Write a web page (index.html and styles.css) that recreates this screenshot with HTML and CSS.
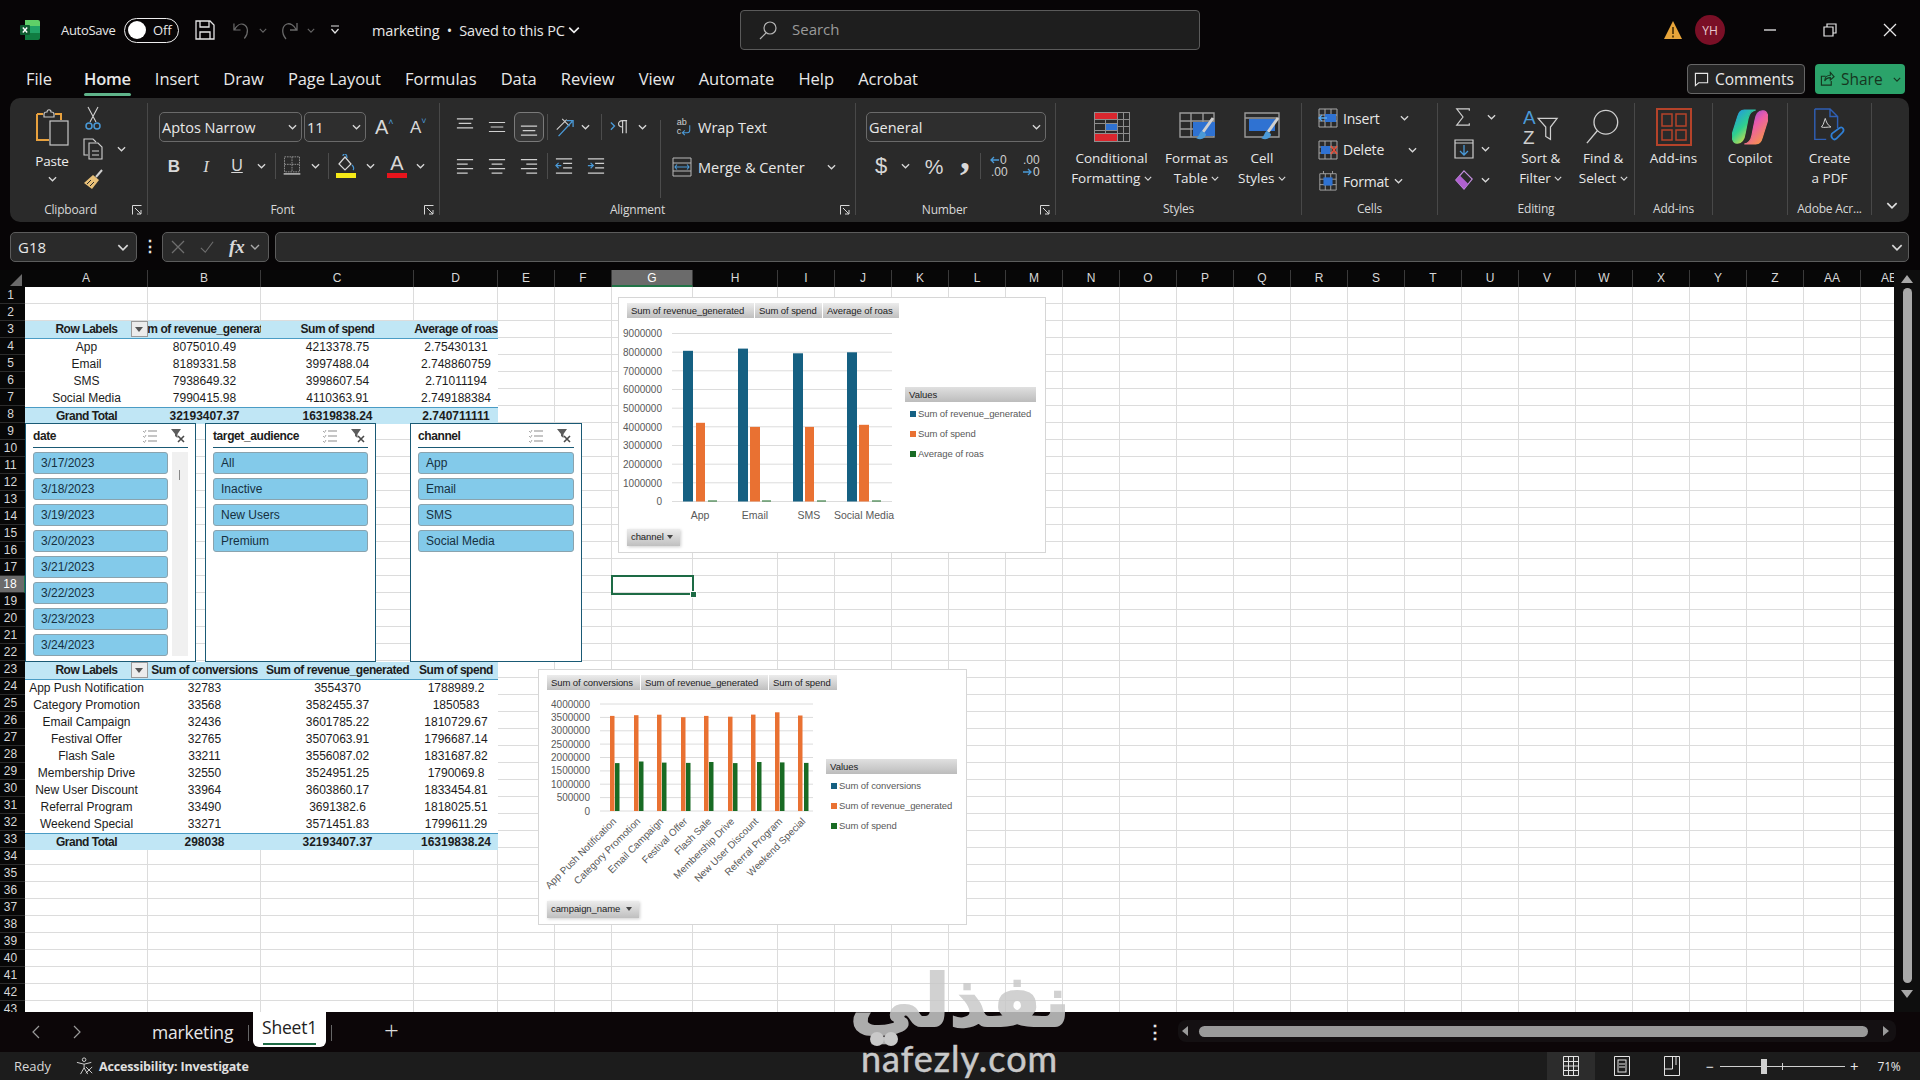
FILE: index.html
```html
<!DOCTYPE html>
<html lang="en">
<head>
<meta charset="UTF-8">
<meta name="viewport" content="width=device-width, initial-scale=1.0">
<title>marketing - Excel</title>
<link rel="stylesheet" href="styles.css">
</head>
<body>
  <!-- shared small icons -->
  <svg class="sprite">
    <symbol id="chev" viewBox="0 0 10 6"><path d="M1 1l4 4 4-4" fill="none" stroke="currentColor" stroke-width="1.4"/></symbol>
    <symbol id="launch" viewBox="0 0 10 10"><path d="M.5 9.5v-9h9M3 3l6 6M9 5v4H5" fill="none" stroke="#d8d8d8" stroke-width="1"/></symbol>
    <symbol id="lines-left" viewBox="0 0 20 20"><path d="M1 3h18M1 8h12M1 13h18M1 18h12" stroke="#cfcfcf" stroke-width="1.3"/></symbol>
    <symbol id="lines-center" viewBox="0 0 20 20"><path d="M1 3h18M4 8h12M1 13h18M4 18h12" stroke="#cfcfcf" stroke-width="1.3"/></symbol>
    <symbol id="lines-right" viewBox="0 0 20 20"><path d="M1 3h18M7 8h12M1 13h18M7 18h12" stroke="#cfcfcf" stroke-width="1.3"/></symbol>
    <symbol id="funnel-x" viewBox="0 0 16 16"><path d="M1 1h10L7.500 6v4L5 8V6z" fill="#5c5c5c"/><path d="M8 8l6 6M14 8l-6 6" stroke="#4a4a4a" stroke-width="1.6"/></symbol>
    <symbol id="multi" viewBox="0 0 16 14"><path d="M6 2h9M6 7h9M6 12h9" stroke="#8c8c8c" stroke-width="1.2"/><path d="M1 2l1.500 1.500L4 1M1 7l1.500 1.500L4 6M1 12l1.500 1.500L4 11" fill="none" stroke="#a8a8a8" stroke-width="1"/></symbol>
  </svg>

  <header class="titlebar">
    <svg class="xl-logo" viewBox="0 0 20 20">
      <path d="M5 0h13a2 2 0 0 1 2 2v4H5z" fill="#5fd068"/><path d="M5 6h15v7H5z" fill="#21a366"/><path d="M5 13h15v5a2 2 0 0 1-2 2H5z" fill="#107c41"/>
      <rect x="0" y="5" width="10" height="10" rx="1" fill="#0e5c30"/><path d="M2.800 7.500l4.400 5M7.200 7.500l-4.400 5" stroke="#fff" stroke-width="1.400"/>
    </svg>
    <span class="autosave">AutoSave</span>
    <span class="toggle"><span class="toggle-knob"></span><span>Off</span></span>
    <svg class="tb-save" viewBox="0 0 20 20"><path d="M1 1h14l4 4v14H1zM5 1v6h9V1M5 19v-7h10v7" fill="none" stroke="#e4e4e4" stroke-width="1.300"/></svg>
    <svg class="tb-undo" viewBox="0 0 18 20"><path d="M1 3v7h7M1.500 10C4 5 8 3 11 4c5 2 6 9 1 15" fill="none" stroke="#6a6a6a" stroke-width="1.300"/></svg>
    <svg class="tb-chev dim"><use href="#chev"/></svg>
    <svg class="tb-redo" viewBox="0 0 18 20"><path d="M17 3v7h-7M16.500 10C14 5 10 3 7 4c-5 2-6 9-1 15" fill="none" stroke="#6a6a6a" stroke-width="1.300"/></svg>
    <svg class="tb-chev dim"><use href="#chev"/></svg>
    <svg class="tb-custom" viewBox="0 0 10 10"><path d="M1 1h8M1.500 4l3.500 4 3.500-4" fill="none" stroke="#e4e4e4" stroke-width="1.200"/></svg>
    <span class="doc-name">marketing &nbsp;•&nbsp; Saved to this PC</span>
    <svg class="doc-chev"><use href="#chev"/></svg>
    <div class="search">
      <svg viewBox="0 0 20 20"><circle cx="12" cy="8" r="6" fill="none" stroke="#b5b5b5" stroke-width="1.200"/><path d="M8 13l-6 6" stroke="#b5b5b5" stroke-width="1.200"/></svg>
      <span>Search</span>
    </div>
    <svg class="warn" viewBox="0 0 20 20"><path d="M10 1l9 18H1z" fill="#e8a53a"/><path d="M10 7v7M10 15.500v2" stroke="#3a2400" stroke-width="1.500"/></svg>
    <span class="avatar">YH</span>
    <svg class="win-btn win-min" viewBox="0 0 14 14"><path d="M1 7h12" stroke="#e8e8e8" stroke-width="1.300"/></svg>
    <svg class="win-btn win-max" viewBox="0 0 14 14"><path d="M1 4h9v9H1zM4 4V1h9v9h-3" fill="none" stroke="#e8e8e8" stroke-width="1.200"/></svg>
    <svg class="win-btn win-close" viewBox="0 0 14 14"><path d="M1 1l12 12M13 1L1 13" stroke="#e8e8e8" stroke-width="1.300"/></svg>
  </header>

  <nav class="tabbar">
    <span class="tab tab-file">File</span>
    <span class="tab tab-active">Home</span>
    <span class="tab">Insert</span>
    <span class="tab">Draw</span>
    <span class="tab">Page Layout</span>
    <span class="tab">Formulas</span>
    <span class="tab">Data</span>
    <span class="tab">Review</span>
    <span class="tab">View</span>
    <span class="tab">Automate</span>
    <span class="tab">Help</span>
    <span class="tab">Acrobat</span>
    <div class="tab-actions">
      <button class="comments">
        <svg viewBox="0 0 16 16"><path d="M1.500 1.500h13v10H5l-3.500 3z" fill="none" stroke="#e8e8e8" stroke-width="1.200"/></svg>
        Comments
      </button>
      <button class="share">
        <svg viewBox="0 0 16 16"><path d="M6 5H1.500v9.500H12V10M5 10c0-4 3-6 6-6V1l4 4.500L11 9V6.500C8 6.500 6 8 5 10z" fill="none" stroke="#16361f" stroke-width="1.200"/></svg>
        Share
        <svg class="share-chev"><use href="#chev"/></svg>
      </button>
    </div>
  </nav>

  <section class="ribbon">
    <div class="group g-clipboard">
      <div class="group-body clip-body">
        <div class="paste">
          <svg class="paste-icon" viewBox="0 0 34 38">
            <path d="M2 6h6M20 6h6v6M2 6v26h12" fill="none" stroke="#e8a13e" stroke-width="2"/>
            <path d="M9 6c0-2 2-2 3-2 0-3 4-3 4 0 1 0 3 0 3 2v3H9z" fill="none" stroke="#c8c8c8" stroke-width="1.200"/>
            <rect x="15" y="13" width="18" height="24" fill="#2a2a2a" stroke="#c8c8c8" stroke-width="1.200"/>
          </svg>
          <span>Paste</span>
          <svg class="chev"><use href="#chev"/></svg>
        </div>
        <div class="clip-tools">
          <svg class="clip-ico" viewBox="0 0 16 24"><path d="M3 1l8 15M13 1L5 16" stroke="#d0d0d0" stroke-width="1.100"/><circle cx="4" cy="20" r="3" fill="none" stroke="#4a9ad8" stroke-width="1.500"/><circle cx="12" cy="20" r="3" fill="none" stroke="#4a9ad8" stroke-width="1.500"/></svg>
          <div class="clip-copy">
            <svg class="clip-ico" viewBox="0 0 20 22"><path d="M5 17H1V1h9l3 3" fill="none" stroke="#d0d0d0" stroke-width="1.100"/><path d="M6 5h9l4 4v12H6z" fill="#2a2a2a" stroke="#d0d0d0" stroke-width="1.100"/><path d="M9 13h7M9 17h7" stroke="#d0d0d0"/></svg>
            <svg class="chev"><use href="#chev"/></svg>
          </div>
          <svg class="clip-ico" viewBox="0 0 20 22"><path d="M19 1l-6 7" stroke="#d0d0d0" stroke-width="2"/><path d="M10 6l6 5-7 9-8-6z" fill="#e8c078"/><path d="M4 15l4-4M7 17l4-4" stroke="#2a2a2a"/></svg>
        </div>
      </div>
      <div class="group-label lb-clipboard">Clipboard<svg class="launch"><use href="#launch"/></svg></div>
    </div>

    <div class="group g-font">
      <div class="group-body">
        <div class="rows r-font1">
          <div class="select sel-font"><span>Aptos Narrow</span><svg class="chev"><use href="#chev"/></svg></div>
          <div class="select sel-size"><span>11</span><svg class="chev"><use href="#chev"/></svg></div>
          <span class="glyph big-a">A<sup>˄</sup></span>
          <span class="glyph small-a">A<sup>˅</sup></span>
        </div>
        <div class="rows r-font2">
          <span class="glyph fmt-b">B</span>
          <span class="glyph fmt-i">I</span>
          <span class="glyph fmt-u">U</span>
          <svg class="chev"><use href="#chev"/></svg>
          <i class="vsep"></i>
          <svg class="ico-20" viewBox="0 0 20 24"><path d="M1 1h18v18H1zM10 1v18M1 10h18" fill="none" stroke="#a0a0a0" stroke-width="1" stroke-dasharray="2 1"/><path d="M0 21.500h20" stroke="#d8d8d8" stroke-width="1.500"/></svg>
          <svg class="chev"><use href="#chev"/></svg>
          <i class="vsep"></i>
          <span class="color-btn"><svg viewBox="0 0 20 18"><path d="M3 10l6-7 6 7-6 6z" fill="none" stroke="#d8d8d8" stroke-width="1.200"/><path d="M7 2c0-3 4-3 4 2M16 11c2 2 2 4 1 5" fill="none" stroke="#4a9ad8" stroke-width="1.200"/></svg><b class="bar-yellow"></b></span>
          <svg class="chev"><use href="#chev"/></svg>
          <span class="color-btn"><span class="glyph color-a">A</span><b class="bar-red"></b></span>
          <svg class="chev"><use href="#chev"/></svg>
        </div>
      </div>
      <div class="group-label lb-font">Font<svg class="launch"><use href="#launch"/></svg></div>
    </div>

    <div class="group g-align">
      <div class="group-body align-body">
        <div class="align-grid">
          <div class="rows r-al1">
            <svg class="ico-18" viewBox="0 0 20 20"><path d="M1 1h18M3 6h14M1 11h18" stroke="#cfcfcf" stroke-width="1.300"/></svg>
            <svg class="ico-18" viewBox="0 0 20 20"><path d="M1 5h18M3 10h14M1 15h18" stroke="#cfcfcf" stroke-width="1.300"/></svg>
            <span class="al-on"><svg class="ico-18" viewBox="0 0 20 20"><path d="M1 9h18M3 14h14M1 19h18" stroke="#cfcfcf" stroke-width="1.300"/></svg></span>
            <i class="vsep"></i>
            <svg class="ico-20" viewBox="0 0 22 22"><path d="M3 14L14 3M9 2l8 8" stroke="#cfcfcf" stroke-width="1.200"/><path d="M5 21L20 5M14 4h7v7" fill="none" stroke="#4a9ad8" stroke-width="1.400"/></svg>
            <svg class="chev"><use href="#chev"/></svg>
            <i class="vsep"></i>
            <svg class="ico-18" viewBox="0 0 20 16"><path d="M1 3l4 4-4 4" fill="none" stroke="#4a9ad8" stroke-width="1.500"/><path d="M14 1v14M18 1v14M14 1h5M14 8c-6 0-6-7 0-7" fill="none" stroke="#cfcfcf" stroke-width="1.300"/></svg>
            <svg class="chev"><use href="#chev"/></svg>
          </div>
          <div class="rows r-al2">
            <svg class="ico-18"><use href="#lines-left"/></svg>
            <svg class="ico-18"><use href="#lines-center"/></svg>
            <svg class="ico-18"><use href="#lines-right"/></svg>
            <i class="vsep"></i>
            <svg class="ico-18" viewBox="0 0 20 20"><path d="M1 2h18M9 7h10M9 12h10M1 18h18" stroke="#cfcfcf" stroke-width="1.300"/><path d="M7 9.500H1M4 6.500l-3 3 3 3" fill="none" stroke="#4a9ad8" stroke-width="1.300"/></svg>
            <svg class="ico-18" viewBox="0 0 20 20"><path d="M1 2h18M9 7h10M9 12h10M1 18h18" stroke="#cfcfcf" stroke-width="1.300"/><path d="M1 9.500h6M4 6.500l3 3-3 3" fill="none" stroke="#4a9ad8" stroke-width="1.300"/></svg>
          </div>
        </div>
        <i class="vsep vsep-tall"></i>
        <div class="wrap-col">
          <div class="wrap-item">
            <svg class="ico-18" viewBox="0 0 18 22"><text x="0" y="9" class="svg-mini">ab</text><text x="0" y="20" class="svg-mini">c</text><path d="M16 9v6c0 3-2 3-3 3H7M10 15l-3 3 3 3" fill="none" stroke="#4a9ad8" stroke-width="1.300"/></svg>
            <span>Wrap Text</span>
          </div>
          <div class="wrap-item">
            <svg class="ico-20 merge-ico" viewBox="0 0 20 20"><path d="M1 1h18v18H1zM1 6h18M1 14h18" fill="none" stroke="#b8b8b8"/><path d="M3 10h14M5 7.500L3 10l2 2.500M15 7.500l2 2.500-2 2.500" fill="none" stroke="#4a9ad8" stroke-width="1.100"/></svg>
            <span>Merge &amp; Center</span>
            <svg class="chev merge-chev"><use href="#chev"/></svg>
          </div>
        </div>
      </div>
      <div class="group-label lb-align">Alignment<svg class="launch"><use href="#launch"/></svg></div>
    </div>

    <div class="group g-number">
      <div class="group-body">
        <div class="select sel-number"><span>General</span><svg class="chev"><use href="#chev"/></svg></div>
        <div class="rows r-num">
          <span class="glyph num-big">$</span>
          <svg class="chev"><use href="#chev"/></svg>
          <span class="glyph num-big num-pct">%</span>
          <span class="glyph num-comma">,</span>
          <i class="vsep"></i>
          <svg class="dec-ico" viewBox="0 0 20 24"><path d="M9 6H1M4 3L1 6l3 3" fill="none" stroke="#4a9ad8" stroke-width="1.300"/><text x="10" y="10">0</text><text x="1" y="22">.00</text></svg>
          <svg class="dec-ico" viewBox="0 0 20 24"><text x="1" y="10">.00</text><path d="M1 18h8M6 15l3 3-3 3" fill="none" stroke="#4a9ad8" stroke-width="1.300"/><text x="11" y="22">0</text></svg>
        </div>
      </div>
      <div class="group-label lb-number">Number<svg class="launch"><use href="#launch"/></svg></div>
    </div>

    <div class="group g-styles">
      <div class="group-body big-row">
        <div class="big-btn">
          <svg class="big-ico" viewBox="0 0 36 30"><rect width="36" height="30" fill="#8e8e8e"/><path d="M1 1h22v6H1zM1 22h22v7H1z" fill="#d9272e"/><path d="M1 12h10v6H1z" fill="#2a2a2a"/><path d="M12 12h11v6H12z" fill="#2f72d2"/><path d="M24 1h5v6h-5zM30 1h5v6h-5zM24 8h5v6h-5zM30 8h5v6h-5zM24 15h5v6h-5zM30 15h5v6h-5zM24 22h5v7h-5zM30 22h5v7h-5zM1 8h10v3H1zM12 8h11v3H12zM1 19h10v2H1zM12 19h11v2H12z" fill="#2a2a2a"/></svg>
          <span>Conditional<br>Formatting <svg class="chev"><use href="#chev"/></svg></span>
        </div>
        <div class="big-btn">
          <svg class="big-ico" viewBox="0 0 36 30"><path d="M1 1h34v24H1zM1 9h34M1 17h34M12 1v24M24 1v24" fill="none" stroke="#9a9a9a" stroke-width="1.400"/><path d="M14 10h22v14H14z" fill="#2f72d2"/><path d="M34 6L24 20" stroke="#d0d0d0" stroke-width="3"/><path d="M23 19c-3 1-2 5-6 7 5 3 10 0 10-4z" fill="#4a9ad8"/></svg>
          <span>Format as<br>Table <svg class="chev"><use href="#chev"/></svg></span>
        </div>
        <div class="big-btn">
          <svg class="big-ico" viewBox="0 0 36 30"><path d="M1 1h34v24H1zM1 6h34" fill="none" stroke="#9a9a9a" stroke-width="1.400"/><path d="M5 7h26v12H5z" fill="#2f72d2"/><path d="M34 6L24 20" stroke="#d0d0d0" stroke-width="3"/><path d="M23 19c-3 1-2 5-6 7 5 3 10 0 10-4z" fill="#4a9ad8"/></svg>
          <span>Cell<br>Styles <svg class="chev"><use href="#chev"/></svg></span>
        </div>
      </div>
      <div class="group-label label-low">Styles</div>
    </div>

    <div class="group g-cells">
      <div class="group-body cell-list">
        <div class="cell-item">
          <svg class="ico-20" viewBox="0 0 20 20"><path d="M1 1h18v18H1zM1 7h18M1 13h18M7 1v18M13 1v18" fill="none" stroke="#a8a8a8"/><path d="M7 6h11v8H7z" fill="#2f72d2"/><path d="M9 10H1M4 7l-3 3 3 3" fill="none" stroke="#5aaaf0" stroke-width="1.300"/></svg>
          <span>Insert</span><svg class="chev chev-insert"><use href="#chev"/></svg>
        </div>
        <div class="cell-item">
          <svg class="ico-20" viewBox="0 0 20 20"><path d="M1 1h18v18H1zM1 7h18M1 13h18M7 1v18M13 1v18" fill="none" stroke="#a8a8a8"/><path d="M3 6h9v8H3z" fill="#2f72d2"/><path d="M13 6l6 8M19 6l-6 8" stroke="#e8503a" stroke-width="1.500"/></svg>
          <span>Delete</span><svg class="chev chev-delete"><use href="#chev"/></svg>
        </div>
        <div class="cell-item">
          <svg class="ico-20" viewBox="0 0 20 22"><path d="M1 3h18v18H1zM1 9h18M1 15h18M7 3v18M13 3v18" fill="none" stroke="#a8a8a8"/><path d="M5 7h10v9H5z" fill="#2f72d2"/><path d="M5 0v3M15 0v3" stroke="#a8a8a8"/></svg>
          <span>Format</span><svg class="chev"><use href="#chev"/></svg>
        </div>
      </div>
      <div class="group-label label-low">Cells</div>
    </div>

    <div class="group g-editing">
      <div class="group-body edit-body">
        <div class="edit-small">
          <div class="edit-item"><svg class="ico-18" viewBox="0 0 18 20"><path d="M16 3V1H2l7 9-7 9h14v-2" fill="none" stroke="#cfcfcf" stroke-width="1.300"/></svg><svg class="chev edit-chev1"><use href="#chev"/></svg></div>
          <div class="edit-item"><svg class="ico-20" viewBox="0 0 20 20"><path d="M1 1h18v18H1zM1 4h18" fill="none" stroke="#cfcfcf" stroke-width="1.200"/><path d="M10 6v10M6 12l4 4 4-4" fill="none" stroke="#4a9ad8" stroke-width="1.300"/></svg><svg class="chev"><use href="#chev"/></svg></div>
          <div class="edit-item"><svg class="ico-20" viewBox="0 0 20 22"><path d="M10 1l9 9-9 11-9-10z" fill="none" stroke="#c58fe0" stroke-width="1.300"/><path d="M5.500 6l9 9-4.500 6-9-10z" fill="#b060d0"/></svg><svg class="chev"><use href="#chev"/></svg></div>
        </div>
        <div class="big-btn btn-sort">
          <svg class="big-ico" viewBox="0 0 38 38"><text x="0" y="16" class="svg-az a-blue">A</text><text x="0" y="37" class="svg-az">Z</text><path d="M16 10h20l-7 9v13l-5-3V19z" fill="none" stroke="#cfcfcf" stroke-width="1.300"/></svg>
          <span>Sort &amp;<br>Filter <svg class="chev"><use href="#chev"/></svg></span>
        </div>
        <div class="big-btn btn-find">
          <svg class="big-ico" viewBox="0 0 38 38"><circle cx="22" cy="14" r="12.500" fill="none" stroke="#cfcfcf" stroke-width="1.400"/><path d="M13 23L2 36" stroke="#cfcfcf" stroke-width="1.400"/></svg>
          <span>Find &amp;<br>Select <svg class="chev"><use href="#chev"/></svg></span>
        </div>
      </div>
      <div class="group-label label-low">Editing</div>
    </div>

    <div class="group g-addins">
      <div class="group-body big-row">
        <div class="big-btn">
          <svg class="big-ico" viewBox="0 0 36 38"><rect x="1" y="1" width="34" height="36" fill="none" stroke="#b5432a" stroke-width="2"/><rect x="6" y="6" width="10" height="12" fill="none" stroke="#b5432a" stroke-width="1.500"/><rect x="20" y="6" width="10" height="12" fill="none" stroke="#b5432a" stroke-width="1.500"/><rect x="6" y="22" width="10" height="10" fill="none" stroke="#b5432a" stroke-width="1.500"/><rect x="20" y="22" width="10" height="10" fill="none" stroke="#b5432a" stroke-width="1.500"/></svg>
          <span>Add-ins</span>
        </div>
      </div>
      <div class="group-label label-low">Add-ins</div>
    </div>

    <div class="group g-copilot">
      <div class="group-body big-row">
        <div class="big-btn">
          <svg class="big-ico" viewBox="0 0 38 38">
            <defs>
              <linearGradient id="cp1" x1="0" y1="0" x2=".7" y2="1"><stop offset="0" stop-color="#1f8ff0"/><stop offset=".55" stop-color="#2fd08e"/><stop offset="1" stop-color="#f6dc3c"/></linearGradient>
              <linearGradient id="cp2" x1="0" y1="0" x2=".7" y2="1"><stop offset="0" stop-color="#7a4cf0"/><stop offset=".5" stop-color="#ec5ca8"/><stop offset="1" stop-color="#f6944a"/></linearGradient>
            </defs>
            <path d="M13 1h12c-5 1-7 4-8 9l-3 15c-1 7-4 11-8 11h-1C1 36-1 30 1 24L6 8c1-4 3-7 7-7z" fill="url(#cp1)" stroke="url(#cp1)" stroke-width="1.200"/>
            <path d="M25 37H13c5-1 7-4 8-9l3-15c1-7 4-11 8-11h1c4 0 6 6 4 12l-5 16c-1 4-3 7-7 7z" fill="url(#cp2)" stroke="url(#cp2)" stroke-width="1.200"/>
          </svg>
          <span>Copilot</span>
        </div>
      </div>
    </div>

    <div class="group g-adobe">
      <div class="group-body big-row">
        <div class="big-btn">
          <svg class="big-ico" viewBox="0 0 34 40"><path d="M1 1h16l8 8v12M1 1v32h12M17 1v8h8" fill="none" stroke="#2f5fb5" stroke-width="1.500"/><path d="M8 20c3-3 3-8 4-9 1 3 2 7 6 9-4 0-7 1-10 0z" fill="none" stroke="#d8d8d8"/><path d="M19 27l8-6c3-2 6 2 3 5l-6 6c-3 3-7-1-5-5z" fill="none" stroke="#2f7fd5" stroke-width="1.800"/></svg>
          <span>Create<br>a PDF</span>
        </div>
      </div>
      <div class="group-label label-low">Adobe Acr...</div>
    </div>
    <svg class="ribbon-collapse"><use href="#chev"/></svg>
  </section>

  <section class="formulabar">
    <div class="namebox"><span>G18</span><svg class="chev"><use href="#chev"/></svg></div>
    <span class="fb-dots">⋮</span>
    <div class="fb-btns">
      <svg viewBox="0 0 14 14"><path d="M1 1l12 12M13 1L1 13" stroke="#6e6e6e" stroke-width="1.300"/></svg>
      <svg viewBox="0 0 16 14"><path d="M1 8l5 5L15 1" fill="none" stroke="#6e6e6e" stroke-width="1.300"/></svg>
      <span class="fx">fx</span>
      <svg class="chev"><use href="#chev"/></svg>
    </div>
    <div class="fb-input"><svg class="chev"><use href="#chev"/></svg></div>
  </section>

  <main class="sheet">
    <div class="rowheads">
      <div class="corner"><svg viewBox="0 0 12 12"><path d="M12 0v12H0z" fill="#6a6a6a"/></svg></div>
      <div>1</div><div>2</div><div>3</div><div>4</div><div>5</div><div>6</div><div>7</div><div>8</div><div>9</div><div>10</div>
      <div>11</div><div>12</div><div>13</div><div>14</div><div>15</div><div>16</div><div>17</div><div class="row-sel">18</div><div>19</div><div>20</div>
      <div>21</div><div>22</div><div>23</div><div>24</div><div>25</div><div>26</div><div>27</div><div>28</div><div>29</div><div>30</div>
      <div>31</div><div>32</div><div>33</div><div>34</div><div>35</div><div>36</div><div>37</div><div>38</div><div>39</div><div>40</div>
      <div>41</div><div>42</div><div>43</div>
    </div>

    <div class="grid">
      <div class="cols">
        <div class="col col-a"><span>A</span></div>
        <div class="col col-b"><span>B</span></div>
        <div class="col col-c"><span>C</span></div>
        <div class="col col-d"><span>D</span></div>
        <div class="col"><span>E</span></div>
        <div class="col"><span>F</span></div>
        <div class="col col-g col-sel"><span>G</span></div>
        <div class="col col-h"><span>H</span></div>
        <div class="col"><span>I</span></div><div class="col"><span>J</span></div><div class="col"><span>K</span></div>
        <div class="col"><span>L</span></div><div class="col"><span>M</span></div><div class="col"><span>N</span></div>
        <div class="col"><span>O</span></div><div class="col"><span>P</span></div><div class="col"><span>Q</span></div>
        <div class="col"><span>R</span></div><div class="col"><span>S</span></div><div class="col"><span>T</span></div>
        <div class="col"><span>U</span></div><div class="col"><span>V</span></div><div class="col"><span>W</span></div>
        <div class="col"><span>X</span></div><div class="col"><span>Y</span></div><div class="col"><span>Z</span></div>
        <div class="col"><span>AA</span></div><div class="col"><span>AB</span></div>
      </div>

      <div class="cells">
        <table class="pivot pivot-one">
          <colgroup><col class="w-a"><col class="w-b"><col class="w-c"><col class="w-d"></colgroup>
          <tr class="pv-head"><th><div class="clip">Row Labels</div><span class="pv-filter"></span></th><th><div class="clip">Sum of revenue_generated</div></th><th><div class="clip">Sum of spend</div></th><th><div class="clip">Average of roas</div></th></tr>
          <tr><td>App</td><td>8075010.49</td><td>4213378.75</td><td>2.75430131</td></tr>
          <tr><td>Email</td><td>8189331.58</td><td>3997488.04</td><td>2.748860759</td></tr>
          <tr><td>SMS</td><td>7938649.32</td><td>3998607.54</td><td>2.71011194</td></tr>
          <tr><td>Social Media</td><td>7990415.98</td><td>4110363.91</td><td>2.749188384</td></tr>
          <tr class="pv-total"><th>Grand Total</th><th>32193407.37</th><th>16319838.24</th><th>2.740711111</th></tr>
        </table>

        <table class="pivot pivot-two">
          <colgroup><col class="w-a"><col class="w-b"><col class="w-c"><col class="w-d"></colgroup>
          <tr class="pv-head"><th><div class="clip">Row Labels</div><span class="pv-filter"></span></th><th><div class="clip">Sum of conversions</div></th><th><div class="clip">Sum of revenue_generated</div></th><th><div class="clip">Sum of spend</div></th></tr>
          <tr><td>App Push Notification</td><td>32783</td><td>3554370</td><td>1788989.2</td></tr>
          <tr><td>Category Promotion</td><td>33568</td><td>3582455.37</td><td>1850583</td></tr>
          <tr><td>Email Campaign</td><td>32436</td><td>3601785.22</td><td>1810729.67</td></tr>
          <tr><td>Festival Offer</td><td>32765</td><td>3507063.91</td><td>1796687.14</td></tr>
          <tr><td>Flash Sale</td><td>33211</td><td>3556087.02</td><td>1831687.82</td></tr>
          <tr><td>Membership Drive</td><td>32550</td><td>3524951.25</td><td>1790069.8</td></tr>
          <tr><td>New User Discount</td><td>33964</td><td>3603860.17</td><td>1833454.81</td></tr>
          <tr><td>Referral Program</td><td>33490</td><td>3691382.6</td><td>1818025.51</td></tr>
          <tr><td>Weekend Special</td><td>33271</td><td>3571451.83</td><td>1799611.29</td></tr>
          <tr class="pv-total"><th>Grand Total</th><th>298038</th><th>32193407.37</th><th>16319838.24</th></tr>
        </table>

        <!-- slicers float over the cells -->
        <div class="slicer sl-date">
          <div class="sl-head"><b>date</b><svg class="sl-multi"><use href="#multi"/></svg><svg class="sl-clear"><use href="#funnel-x"/></svg></div>
          <div class="sl-body">
            <div class="sl-list">
              <span class="sl-item">3/17/2023</span><span class="sl-item">3/18/2023</span><span class="sl-item">3/19/2023</span><span class="sl-item">3/20/2023</span>
              <span class="sl-item">3/21/2023</span><span class="sl-item">3/22/2023</span><span class="sl-item">3/23/2023</span><span class="sl-item">3/24/2023</span>
            </div>
            <div class="sl-scroll"><i></i></div>
          </div>
        </div>
        <div class="slicer sl-audience">
          <div class="sl-head"><b>target_audience</b><svg class="sl-multi"><use href="#multi"/></svg><svg class="sl-clear"><use href="#funnel-x"/></svg></div>
          <div class="sl-list">
            <span class="sl-item">All</span><span class="sl-item">Inactive</span><span class="sl-item">New Users</span><span class="sl-item">Premium</span>
          </div>
        </div>
        <div class="slicer sl-channel">
          <div class="sl-head"><b>channel</b><svg class="sl-multi"><use href="#multi"/></svg><svg class="sl-clear"><use href="#funnel-x"/></svg></div>
          <div class="sl-list">
            <span class="sl-item">App</span><span class="sl-item">Email</span><span class="sl-item">SMS</span><span class="sl-item">Social Media</span>
          </div>
        </div>

        <!-- chart 1 -->
        <div class="chart chart-one">
          <div class="fields">
            <span class="field f-127">Sum of revenue_generated</span><span class="field f-67">Sum of spend</span><span class="field f-76">Average of roas</span>
          </div>
          <div class="chart-main">
            <svg class="plot plot-one" viewBox="0 0 268 205">
              <g class="gridlines">
                <path d="M45 15h220M45 33.700h220M45 52.300h220M45 71h220M45 89.700h220M45 108.300h220M45 127h220M45 145.700h220M45 164.300h220M45 183h220"/>
              </g>
              <g class="axis-y">
                <text x="35" y="18.500">9000000</text><text x="35" y="37">8000000</text><text x="35" y="56">7000000</text><text x="35" y="74.500">6000000</text><text x="35" y="93">5000000</text><text x="35" y="112">4000000</text><text x="35" y="130.500">3000000</text><text x="35" y="149">2000000</text><text x="35" y="168">1000000</text><text x="35" y="186.500">0</text>
              </g>
              <g class="bars-blue"><rect x="56" y="32.300" width="10" height="150.700"/><rect x="111" y="30.100" width="10" height="152.900"/><rect x="166" y="34.800" width="10" height="148.200"/><rect x="220" y="33.800" width="10" height="149.200"/></g>
              <g class="bars-orange"><rect x="69" y="104.300" width="9" height="78.700"/><rect x="123" y="108.400" width="10" height="74.600"/><rect x="178" y="108.400" width="9" height="74.600"/><rect x="232" y="106.300" width="10" height="76.700"/></g>
              <g class="bars-green"><rect x="81" y="182" width="9" height="1"/><rect x="135" y="182" width="9" height="1"/><rect x="190" y="182" width="9" height="1"/><rect x="245" y="182" width="9" height="1"/></g>
              <g class="axis-x"><text x="73" y="200.500">App</text><text x="128" y="200.500">Email</text><text x="182" y="200.500">SMS</text><text x="237" y="200.500">Social Media</text></g>
            </svg>
            <div class="legend legend-one">
              <div class="legend-title">Values</div>
              <div class="legend-item"><i class="sw-blue"></i>Sum of revenue_generated</div>
              <div class="legend-item"><i class="sw-orange"></i>Sum of spend</div>
              <div class="legend-item"><i class="sw-green"></i>Average of roas</div>
            </div>
          </div>
          <span class="field field-filter f-53">channel<em></em></span>
        </div>

        <!-- chart 2 -->
        <div class="chart chart-two">
          <div class="fields">
            <span class="field f-93">Sum of conversions</span><span class="field f-127">Sum of revenue_generated</span><span class="field f-68">Sum of spend</span>
          </div>
          <div class="chart-main">
            <svg class="plot plot-two" viewBox="0 0 268 206">
              <g class="gridlines">
                <path d="M53 14h213M53 27.400h213M53 40.800h213M53 54.100h213M53 67.500h213M53 80.900h213M53 94.200h213M53 107.600h213M53 121h213"/>
              </g>
              <g class="axis-y">
                <text x="43" y="17.500">4000000</text><text x="43" y="31">3500000</text><text x="43" y="44.300">3000000</text><text x="43" y="57.600">2500000</text><text x="43" y="71">2000000</text><text x="43" y="84.400">1500000</text><text x="43" y="97.700">1000000</text><text x="43" y="111">500000</text><text x="43" y="124.500">0</text>
              </g>
              <g class="bars-orange">
                <rect x="63" y="25.900" width="4.500" height="95.100"/><rect x="87" y="25.200" width="4.500" height="95.800"/><rect x="110" y="24.700" width="4.500" height="96.300"/>
                <rect x="134" y="27.200" width="4.500" height="93.800"/><rect x="157" y="25.900" width="4.500" height="95.100"/><rect x="181" y="26.700" width="4.500" height="94.300"/>
                <rect x="204" y="24.600" width="4.500" height="96.400"/><rect x="228" y="22.300" width="4.500" height="98.700"/><rect x="251" y="25.500" width="4.500" height="95.500"/>
              </g>
              <g class="bars-green">
                <rect x="68" y="73.100" width="4.500" height="47.900"/><rect x="92" y="71.500" width="4.500" height="49.500"/><rect x="115" y="72.600" width="4.500" height="48.400"/>
                <rect x="139" y="72.900" width="4.500" height="48.100"/><rect x="162" y="72" width="4.500" height="49"/><rect x="186" y="73.100" width="4.500" height="47.900"/>
                <rect x="210" y="72" width="4.500" height="49"/><rect x="233" y="72.400" width="4.500" height="48.600"/><rect x="257" y="72.900" width="4.500" height="48.100"/>
              </g>
              <g class="axis-rot">
                <text transform="translate(70 132) rotate(-45)">App Push Notification</text>
                <text transform="translate(94 132) rotate(-45)">Category Promotion</text>
                <text transform="translate(117 132) rotate(-45)">Email Campaign</text>
                <text transform="translate(141 132) rotate(-45)">Festival Offer</text>
                <text transform="translate(165 132) rotate(-45)">Flash Sale</text>
                <text transform="translate(188 132) rotate(-45)">Membership Drive</text>
                <text transform="translate(212 132) rotate(-45)">New User Discount</text>
                <text transform="translate(236 132) rotate(-45)">Referral Program</text>
                <text transform="translate(259 132) rotate(-45)">Weekend Special</text>
              </g>
            </svg>
            <div class="legend legend-two">
              <div class="legend-title">Values</div>
              <div class="legend-item"><i class="sw-blue"></i>Sum of conversions</div>
              <div class="legend-item"><i class="sw-orange"></i>Sum of revenue_generated</div>
              <div class="legend-item"><i class="sw-green"></i>Sum of spend</div>
            </div>
          </div>
          <span class="field field-filter f-92">campaign_name<em></em></span>
        </div>

        <div class="active-cell"><i></i></div>
      </div>
    </div>

    <div class="vscroll">
      <i class="arrow-up"></i>
      <div class="vthumb"></div>
      <i class="arrow-down"></i>
    </div>
  </main>

  <section class="sheetbar">
    <svg class="nav-chev" viewBox="0 0 8 14"><path d="M7 1L1 7l6 6" fill="none" stroke="#9a9a9a" stroke-width="1.200"/></svg>
    <svg class="nav-chev nav-next" viewBox="0 0 8 14"><path d="M1 1l6 6-6 6" fill="none" stroke="#9a9a9a" stroke-width="1.200"/></svg>
    <span class="sheet-tab">marketing</span>
    <i class="tab-sep"></i>
    <span class="sheet-tab sheet-on">Sheet1</span>
    <i class="tab-sep"></i>
    <span class="sheet-add">+</span>
    <span class="sheet-dots">⋮</span>
    <div class="hscroll"><i class="arrow-left"></i><div class="hthumb"></div><i class="arrow-right"></i></div>
  </section>

  <footer class="statusbar">
    <span class="st-ready">Ready</span>
    <svg class="st-acc" viewBox="0 0 20 20"><circle cx="9" cy="3" r="2" fill="none" stroke="#e0e0e0"/><path d="M1 6l8 2 8-2M9 8v4l-4 7M9 12l4 7M11 11l7 7M18 11l-7 7" fill="none" stroke="#e0e0e0"/></svg>
    <span class="st-access">Accessibility: Investigate</span>
    <div class="st-right">
      <span class="view-on"><svg viewBox="0 0 16 20"><path d="M.5.500h15v19H.5zM.5 5.500h15M.5 10h15M.5 14.500h15M5.500.500v19M10.500.500v19" fill="none" stroke="#e4e4e4"/></svg></span>
      <svg class="view-ico" viewBox="0 0 16 20"><path d="M.5.500h15v19H.5z" fill="none" stroke="#e4e4e4"/><rect x="4" y="4" width="8" height="12" fill="none" stroke="#e4e4e4"/><path d="M5 8h6M5 11h6" stroke="#e4e4e4"/></svg>
      <svg class="view-ico view-break" viewBox="0 0 16 20"><path d="M.5.500h15v19H.5zM.5 13h8V.500M12 .500V9" fill="none" stroke="#e4e4e4"/></svg>
      <span class="zoom-minus">−</span>
      <div class="zoom-slider"><i class="zoom-tick"></i><i class="zoom-thumb"></i></div>
      <span class="zoom-plus">+</span>
      <span class="zoom-val">71%</span>
    </div>
  </footer>

  <!-- site watermark burnt into the capture -->
  <div class="watermark">
    <span class="wm-ar" lang="ar" dir="rtl">نفذلي</span>
    <span class="wm-dots"><i></i><i></i></span>
    <span class="wm-en">nafezly.com</span>
  </div>
</body>
</html>
```

FILE: styles.css
```css
* { box-sizing: border-box; }
html, body { margin: 0; height: 100%; }
body {
  width: 1920px;
  height: 1080px;
  overflow: hidden;
  background: #070506;
  color: #e8e8e8;
  font-family: "Open Sans", "Noto Sans", sans-serif;
  font-size: 14px;
  display: flex;
  flex-direction: column;
  position: relative;
}
.sprite { display: none; }
.chev { width: 9px; height: 6px; color: #d8d8d8; flex: none; }
svg { display: block; }

/* title bar */
.titlebar { height: 60px; display: flex; align-items: center; flex: none; }
.xl-logo { width: 20px; height: 20px; margin-left: 20px; }
.autosave { margin-left: 21px; width: 54px; font-size: 13px; white-space: nowrap; letter-spacing: -.3px; }
.toggle {
  margin-left: 9px;
  width: 55px;
  height: 25px;
  border: 1px solid #eee;
  border-radius: 13px;
  display: flex;
  align-items: center;
  gap: 7px;
  padding-left: 3px;
  font-size: 13px;
}
.toggle-knob { width: 18px; height: 18px; border-radius: 50%; background: #fff; }
.tb-save { width: 20px; height: 20px; margin-left: 16px; }
.tb-undo { width: 17px; height: 20px; margin-left: 18px; }
.tb-redo { width: 18px; height: 20px; margin-left: 13px; }
.tb-chev { width: 8px; height: 5px; margin-left: 9px; }
.tb-chev.dim { color: #666; }
.tb-custom { width: 10px; height: 10px; margin-left: 15px; }
.doc-name { margin-left: 32px; width: 190px; font-size: 14.500px; white-space: nowrap; letter-spacing: -.15px; }
.doc-chev { width: 12px; height: 8px; margin-left: 6px; color: #eee; }
.search {
  position: absolute;
  left: 740px;
  top: 10px;
  width: 460px;
  height: 40px;
  background: #1e1e1e;
  border: 1px solid #5a5a5a;
  border-radius: 4px;
  display: flex;
  align-items: center;
  padding-left: 17px;
  gap: 14px;
  color: #9a9a9a;
  font-size: 15px;
}
.search span { margin-top: -2px; }
.search svg { width: 20px; height: 20px; }
.warn { position: absolute; left: 1663px; top: 20px; width: 20px; height: 20px; }
.avatar {
  position: absolute;
  left: 1695px;
  top: 15px;
  width: 30px;
  height: 30px;
  border-radius: 50%;
  background: #7a0f26;
  color: #e9c9cf;
  font-size: 12px;
  display: flex;
  align-items: center;
  justify-content: center;
}
.win-btn { position: absolute; top: 23px; width: 14px; height: 14px; }
.win-min { left: 1763px; }
.win-max { left: 1823px; }
.win-close { left: 1883px; }

/* menu tabs */
.tabbar { height: 38px; display: flex; align-items: center; gap: 24.200px; padding-left: 26px; flex: none; }
.tab { font-size: 16.500px; line-height: 34px; height: 38px; white-space: nowrap; position: relative; padding-top: 2px; letter-spacing: -.05px; }
.tab-file { margin-right: 8px; }
.tab-active { font-weight: 600; letter-spacing: -.3px; }
.tab-active::after {
  content: "";
  position: absolute;
  left: 0;
  right: 0;
  bottom: 2px;
  height: 3px;
  background: #5fb38a;
  border-radius: 2px;
}
.tab-actions { position: absolute; left: 1687px; top: 64px; display: flex; gap: 10px; }
.comments, .share {
  height: 30px;
  border-radius: 4px;
  font: inherit;
  font-size: 15.500px;
  display: flex;
  align-items: center;
  gap: 6px;
  padding: 0 0 0 6px;
  color: #e8e8e8;
}
.comments { width: 118px; background: #242424; border: 1px solid #666; }
.comments svg { width: 15px; height: 15px; }
.share { width: 90px; background: #2ba36a; border: 0; color: #16361f; padding-left: 5px; }
.share svg { width: 15px; height: 16px; }
.share .share-chev { width: 8px; height: 5px; margin-left: 4px; color: #16361f; }

/* ribbon */
.ribbon {
  height: 124px;
  margin: 0 11px 0 10px;
  background: #2a2a2a;
  border-radius: 10px;
  display: flex;
  padding-top: 5px;
  flex: none;
  position: relative;
}
.group {
  height: 112px;
  border-right: 1px solid #484848;
  display: flex;
  flex-direction: column;
  position: relative;
  flex: none;
}
.group-body { flex: 1; min-height: 0; }
.group-label {
  height: 14px;
  line-height: 14px;
  text-align: center;
  font-size: 12px;
  color: #d8d8d8;
  margin-bottom: -2px;
  letter-spacing: -.2px;
}
.label-low { margin-bottom: -1px; }
.lb-clipboard { padding-right: 16px; }
.lb-font { padding-right: 22px; }
.lb-align { padding-right: 20px; }
.lb-number { padding-right: 22px; }
.launch { position: absolute; right: 5px; bottom: 0; width: 10px; height: 10px; }
.g-clipboard { width: 138px; }
.g-font { width: 292px; }
.g-align { width: 416px; }
.g-number { width: 200px; }
.g-styles { width: 246px; }
.g-cells { width: 136px; }
.g-editing { width: 197px; }
.g-addins { width: 78px; }
.g-copilot { width: 75px; }
.g-adobe { width: 84px; }
.ribbon-collapse { position: absolute; right: 11px; top: 104px; width: 12px; height: 7px; color: #e0e0e0; }

.clip-body { display: flex; padding: 5px 0 0 22px; }
.paste { width: 40px; display: flex; flex-direction: column; align-items: center; font-size: 13.500px; color: #eee; letter-spacing: -.2px; }
.paste-icon { width: 34px; height: 38px; }
.paste span { margin-top: 5px; line-height: 20px; }
.paste .chev { margin-top: 5px; }
.clip-tools { display: flex; flex-direction: column; margin: -2px 0 0 11px; gap: 7px; }
.clip-ico { width: 20px; height: 24px; }
.clip-copy { display: flex; align-items: center; gap: 14px; width: 44px; }

.rows { display: grid; justify-items: center; align-items: center; }
.vsep { width: 1px; height: 26px; background: #4c4c4c; display: block; }
.vsep-tall { height: 78px; margin: 8px 0 0 3px; flex: none; }
.glyph { font-family: "Liberation Sans", sans-serif; color: #d8d8d8; line-height: 1; }
.ico-18 { width: 18px; height: 18px; }
.ico-20 { width: 20px; height: 20px; }

.g-font .group-body { padding: 9px 0 0 11px; }
.r-font1 { grid-template-columns: 145px 62px 42px 28px; justify-items: start; height: 30px; }
.select {
  height: 30px;
  border: 1px solid #6a6a6a;
  border-radius: 5px;
  background: #2e2e2e;
  display: flex;
  align-items: center;
  justify-content: space-between;
  padding: 0 4px 0 2px;
  font-size: 14.500px;
}
.sel-font { width: 143px; }
.sel-size { width: 62px; }
.big-a { font-size: 20px; margin-left: 9px; }
.small-a { font-size: 17px; margin-left: 2px; }
.big-a sup, .small-a sup { font-size: 9px; color: #4a9ad8; vertical-align: 9px; line-height: 0; }
.r-font2 { grid-template-columns: 32px 32px 30px 18px 10px 24px 22px 4px 32px 16px 38px 8px; height: 28px; margin-top: 10px; margin-left: -1px; }
.fmt-b { font-weight: 700; font-size: 17px; }
.fmt-i { font-style: italic; font-size: 17px; font-family: "Liberation Serif", serif; }
.fmt-u { text-decoration: underline; font-size: 16px; }
.color-btn { display: flex; flex-direction: column; align-items: center; width: 20px; height: 25px; }
.color-btn svg { width: 20px; height: 18px; }
.color-a { font-size: 20px; height: 18px; line-height: 18px; }
.bar-yellow, .bar-red { width: 20px; height: 5px; margin-top: 1px; display: block; }
.bar-yellow { background: #f6ea17; }
.bar-red { background: #e8141c; }

.align-body { display: flex; padding: 9px 0 0 9px; }
.align-grid { width: 208px; flex: none; }
.r-al1 { grid-template-columns: 32px 32px 32px 4px 30px 12px 20px 16px 30px; height: 30px; justify-content: start; }
.r-al2 { grid-template-columns: 32px 32px 32px 4px 30px 34px; height: 28px; margin-top: 10px; justify-content: start; }
.al-on {
  width: 30px;
  height: 30px;
  border: 1px solid #7a7a7a;
  border-radius: 6px;
  background: #363636;
  display: flex;
  align-items: center;
  justify-content: center;
}
.wrap-col { margin-left: 14px; width: 170px; padding-top: 2px; }
.wrap-item { display: flex; align-items: center; gap: 5px; height: 26px; font-size: 14.500px; white-space: nowrap; margin-bottom: 14px; }
.merge-ico { margin: 0 1px 0 -3px; }
.merge-chev { margin-left: 17px; }

.g-number .group-body { padding: 9px 0 0 10px; }
.sel-number { width: 180px; }
.r-num { grid-template-columns: 30px 18px 40px 22px 8px 32px 32px; height: 28px; margin-top: 10px; justify-content: start; }
.num-big { font-size: 22px; }
.num-pct { font-size: 21px; }
.num-comma { font-family: "Liberation Serif", serif; font-weight: 700; font-size: 40px; margin-top: -20px; }
.dec-ico { width: 20px; height: 24px; }
.dec-ico text { font: 12px "Liberation Sans", sans-serif; fill: #cfcfcf; }

.big-row { display: flex; padding-top: 5px; }
.big-btn {
  display: flex;
  flex-direction: column;
  align-items: center;
  text-align: center;
  font-size: 13.500px;
  line-height: 20px;
  white-space: nowrap;
}
.big-btn .chev { display: inline-block; width: 8px; height: 5px; vertical-align: 2px; }
.big-ico { width: 36px; height: 38px; margin-bottom: 2px; }
.g-styles .big-row { padding: 9px 0 0 19px; gap: 12px; }
.g-styles .big-ico { height: 30px; margin-bottom: 6px; }
.g-styles .big-btn { width: 73px; }
.g-styles .big-btn:nth-child(3) { width: 54px; margin-left: -10px; }
.g-addins .big-row, .g-copilot .big-row, .g-adobe .big-row { justify-content: center; }

.cell-list { padding: 2px 0 0 16px; }
.cell-item { display: flex; align-items: center; gap: 5px; height: 26px; margin-bottom: 5.500px; font-size: 14px; letter-spacing: -.2px; }
.chev-insert { margin-left: 15px; }
.chev-delete { margin-left: 19px; }

.edit-body { display: flex; padding: 1px 0 0 16px; }
.edit-small { width: 48px; flex: none; }
.edit-item { display: flex; align-items: center; gap: 7px; height: 26px; margin-bottom: 5.500px; }
.edit-chev1 { margin-left: 8px; }
.btn-sort { width: 68px; margin: 4px 0 0 5px; }
.btn-find { width: 62px; margin: 4px 0 0 -2px; }
.svg-mini { font: 11px "Liberation Sans", sans-serif; fill: #cfcfcf; }
.svg-az { font: 20px "Liberation Sans", sans-serif; fill: #cfcfcf; }
.a-blue { fill: #4a9ad8; }

/* formula bar */
.formulabar { height: 30px; margin: 10px 11px 0 10px; display: flex; align-items: stretch; flex: none; }
.namebox, .fb-btns, .fb-input {
  background: #2a2a2a;
  border: 1px solid #5c5c5c;
  border-radius: 5px;
  display: flex;
  align-items: center;
}
.namebox { width: 127px; justify-content: space-between; padding: 0 7px; font-size: 15px; }
.namebox .chev { width: 12px; height: 7px; }
.fb-dots { width: 25px; text-align: center; line-height: 28px; font-weight: 700; font-size: 16px; }
.fb-btns { width: 107px; padding-left: 8px; gap: 15px; }
.fb-btns svg { width: 14px; height: 14px; }
.fb-btns .chev { width: 10px; height: 6px; margin-left: -10px; color: #aaa; }
.fx { font: italic 700 19px "Liberation Serif", serif; color: #d8d8d8; }
.fb-input { flex: 1; margin-left: 6px; justify-content: flex-end; padding-right: 5px; }
.fb-input .chev { width: 12px; height: 7px; }

/* sheet */
.sheet { height: 742px; margin-top: 8px; display: flex; flex: none; font-family: "Liberation Sans", sans-serif; }
.rowheads { width: 25px; flex: none; background: #070707; overflow: hidden; font-size: 12px; color: #d8d8d8; }
.rowheads > div { height: 17px; line-height: 17px; text-align: center; border-bottom: 1px solid #2c2c2c; padding-right: 4px; }
.rowheads .corner { border: 0; display: flex; justify-content: flex-end; align-items: flex-end; padding: 0 3px 1px 0; }
.corner svg { width: 12px; height: 12px; }
.rowheads .row-sel { background: #6b6b6b; color: #fff; border-right: 1px solid #217346; }

.grid { width: 1869px; flex: none; background: #fff; position: relative; overflow: hidden; }
.cols { display: flex; height: 100%; width: 2000px; }
.col { width: 57px; flex: none; border-right: 1px solid #dcdcdc; }
.col span {
  display: block;
  height: 17px;
  line-height: 16px;
  margin-right: -1px;
  background: #070707;
  border-right: 1px solid #3a3a3a;
  color: #d8d8d8;
  font-size: 12px;
  text-align: center;
}
.col-a { width: 123px; }
.col-b { width: 113px; }
.col-c { width: 153px; }
.col-d { width: 84px; }
.col-g { width: 81px; }
.col-h { width: 85px; }
.col-sel span { background: #6b6b6b; color: #fff; border-bottom: 2px solid #217346; }

.cells {
  position: absolute;
  left: 0;
  top: 17px;
  right: 0;
  bottom: 0;
  padding-top: 34px;
  background: repeating-linear-gradient(to bottom, transparent 0, transparent 16px, #dcdcdc 16px, #dcdcdc 17px);
  color: #1c1c1c;
}
.pivot {
  table-layout: fixed;
  width: 473px;
  border-collapse: collapse;
  background: #fff;
  font-size: 12px;
}
.pivot-two { margin-top: 238px; }
.w-a { width: 123px; }
.w-b { width: 113px; }
.w-c { width: 153px; }
.w-d { width: 84px; }
.pivot tr { height: 17px; }
.pivot td, .pivot th {
  padding: 0;
  height: 17px;
  line-height: 17px;
  text-align: center;
  white-space: nowrap;
  overflow: hidden;
}
.pivot th { font-weight: 700; }
.pv-head th, .pv-total th { background: #c0e6f5; }
.pv-head th { border-bottom: 1px solid #4a9cc5; position: relative; letter-spacing: -.45px; line-height: 16px; }
.pv-total th { border-top: 1px solid #4a9cc5; line-height: 16px; }
.pv-total th:first-child { letter-spacing: -.5px; }
.clip { display: flex; justify-content: center; overflow: hidden; white-space: nowrap; }
.pv-filter {
  position: absolute;
  right: 0;
  top: 0;
  width: 17px;
  height: 16px;
  background: #ececec;
  border: 1px solid #9a9a9a;
}
.pv-filter::after {
  content: "";
  position: absolute;
  left: 3px;
  top: 5px;
  border: 4px solid transparent;
  border-top: 5px solid #555;
  border-bottom: 0;
}

.slicer {
  position: absolute;
  top: 136px;
  height: 239px;
  background: #fff;
  border: 1px solid #1a5a75;
  padding: 0 7px;
}
.sl-date { left: 0; width: 171px; }
.sl-audience { left: 180px; width: 171px; }
.sl-channel { left: 385px; width: 172px; }
.sl-head { height: 24px; border-bottom: 1px solid #1a5a75; display: flex; align-items: center; font-size: 12px; margin-bottom: 4px; }
.sl-head b { flex: 1; letter-spacing: -.4px; }
.sl-multi { width: 16px; height: 14px; }
.sl-clear { width: 16px; height: 16px; margin: 0 2px 0 12px; }
.sl-list { display: flex; flex-direction: column; gap: 4px; flex: 1; }
.sl-item {
  height: 22px;
  line-height: 20px;
  padding-left: 7px;
  font-size: 12px;
  color: #16303f;
  background: #83caea;
  border: 1px solid #8aa3ae;
  border-radius: 3px;
}
.sl-body { display: flex; gap: 4px; }
.sl-scroll { width: 16px; height: 204px; background: #f0f0f0; padding: 18px 7px; }
.sl-scroll i { display: block; width: 1px; height: 10px; background: #888; }

.chart {
  position: absolute;
  background: #fff;
  border: 1px solid #d6d6d6;
  font-size: 9.500px;
}
.chart-one { left: 593px; top: 10px; width: 428px; height: 256px; padding: 5px 8px; }
.chart-two { left: 513px; top: 382px; width: 429px; height: 256px; padding: 5px 8px; }
.fields { display: flex; gap: 1px; height: 15px; }
.field {
  height: 15px;
  line-height: 16px;
  padding-left: 4px;
  background: linear-gradient(#ececec, #bfbfbf);
  color: #222;
  display: block;
  white-space: nowrap;
  letter-spacing: -.08px;
}
.f-127 { width: 127px; }
.f-67 { width: 67px; }
.f-68 { width: 68px; }
.f-76 { width: 76px; }
.f-93 { width: 93px; }
.f-53 { width: 53px; }
.f-92 { width: 92px; }
.chart-main { display: flex; height: 206px; }
.plot { width: 268px; height: 206px; flex: none; overflow: visible; }
.plot text { font: 10px "Liberation Sans", sans-serif; fill: #595959; }
.gridlines path { stroke: #dcdcdc; stroke-width: 1; fill: none; }
.axis-y text { text-anchor: end; }
.axis-x text { text-anchor: middle; }
.axis-rot text { text-anchor: end; }
.plot-one .axis-x text { font-size: 10.500px; }
.bars-blue { fill: #156082; }
.bars-orange { fill: #e97132; }
.bars-green { fill: #196b24; }
.legend { width: 131px; margin-left: 10px; color: #595959; }
.legend-one { padding-top: 69px; }
.legend-two { padding-top: 69px; margin-left: 11px; }
.legend-title {
  height: 15px;
  line-height: 15px;
  padding-left: 4px;
  margin-bottom: 2px;
  background: linear-gradient(#e0e0e0, #bcbcbc);
  color: #222;
}
.legend-item { height: 20px; line-height: 20px; display: flex; align-items: center; gap: 2px; padding-left: 5px; white-space: nowrap; letter-spacing: -.08px; }
.legend-item i { width: 6px; height: 6px; display: block; flex: none; }
.sw-blue { background: #156082; }
.sw-orange { background: #e97132; }
.sw-green { background: #196b24; }
.field-filter { position: relative; height: 17px; box-shadow: 1px 1px 3px rgba(0,0,0,.2); margin-top: 5px; }
.field-filter em {
  position: absolute;
  right: 7px;
  top: 6px;
  border: 3.500px solid transparent;
  border-top: 4px solid #444;
  border-bottom: 0;
}

.active-cell {
  position: absolute;
  left: 586px;
  top: 288px;
  width: 83px;
  height: 20px;
  border: 2px solid #1d6b45;
  background: transparent;
}
.active-cell i {
  position: absolute;
  right: -4px;
  bottom: -4px;
  width: 5px;
  height: 5px;
  background: #1d6b45;
  border: 1px solid #fff;
  box-sizing: content-box;
  margin: -1px;
}

.vscroll { width: 26px; flex: none; background: #0e0e0e; display: flex; flex-direction: column; align-items: center; padding-top: 5px; }
.arrow-up { border: 6px solid transparent; border-bottom: 8px solid #a8a8a8; border-top: 0; }
.vthumb { width: 9px; height: 695px; margin-top: 5px; border-radius: 5px; background: #a8a8a8; }
.arrow-down { border: 6px solid transparent; border-top: 8px solid #a8a8a8; border-bottom: 0; margin-top: 7px; }

/* sheet tabs */
.sheetbar { height: 40px; background: #0c0608; display: flex; align-items: flex-start; position: relative; flex: none; }
.nav-chev { width: 8px; height: 14px; margin: 13px 0 0 32px; flex: none; }
.nav-next { margin-left: 33px; }
.sheet-tab { margin-left: 71px; width: 78px; font-size: 17.500px; line-height: 40px; letter-spacing: -.2px; }
.tab-sep { width: 1px; height: 16px; background: #666; margin: 13px 0 0 18px; }
.sheet-on {
  margin-left: 4px;
  width: 73px;
  height: 35px;
  background: #fff;
  color: #222;
  text-align: center;
  border-radius: 0 0 6px 6px;
  line-height: 31px;
  position: relative;
  font-weight: 400;
}
.sheet-on::after { content: ""; position: absolute; left: 10px; right: 10px; bottom: 2px; height: 2px; background: #1d6b45; }
.sheet-on + .tab-sep { margin-left: 5px; }
.sheet-add { margin-left: 52px; font-size: 26px; line-height: 36px; font-weight: 300; color: #ddd; }
.sheet-dots { position: absolute; left: 1146px; top: 7px; font-size: 18px; font-weight: 700; }
.hscroll { position: absolute; left: 1178px; top: 8px; width: 718px; height: 22px; display: flex; align-items: center; gap: 7px; padding-left: 4px; background: #141012; border-radius: 8px; }
.arrow-left { border: 5px solid transparent; border-right: 6px solid #9a9a9a; border-left: 0; }
.hthumb { width: 669px; height: 11px; border-radius: 6px; background: #9a9a9a; margin-left: 4px; }
.arrow-right { border: 5px solid transparent; border-left: 6px solid #9a9a9a; border-right: 0; margin-left: 8px; }

/* status bar */
.statusbar { height: 28px; background: #1c1c1c; display: flex; align-items: center; position: relative; flex: none; font-size: 13px; }
.st-ready { margin-left: 14px; color: #d8d8d8; width: 48px; }
.st-acc { width: 18px; height: 18px; margin-left: 14px; }
.st-access { margin-left: 5px; font-weight: 700; font-size: 12.500px; letter-spacing: -.15px; color: #e0e0e0; }
.st-right { position: absolute; left: 1547px; top: 0; height: 28px; width: 373px; display: flex; align-items: center; }
.view-on { width: 48px; height: 28px; background: #2c2c2c; display: flex; align-items: center; justify-content: center; }
.view-on svg, .view-ico { width: 16px; height: 20px; }
.view-ico { margin-left: 19px; }
.view-ico.view-break { margin-left: 34px; }
.zoom-minus { margin-left: 26px; font-size: 14px; }
.zoom-slider { width: 125px; height: 1px; background: #cfcfcf; margin-left: 6px; position: relative; }
.zoom-tick { position: absolute; left: 62px; top: -3px; width: 1px; height: 7px; background: #cfcfcf; }
.zoom-thumb { position: absolute; left: 41px; top: -7px; width: 6px; height: 15px; background: #cfcfcf; }
.zoom-plus { margin-left: 5px; font-size: 15px; }
.zoom-val { margin-left: 19px; font-size: 12px; letter-spacing: -.3px; }

/* watermark */
.watermark { position: absolute; left: 855px; top: 958px; width: 215px; height: 122px; color: #c9c9c9; }
.wm-ar {
  position: absolute;
  left: 0;
  top: 8px;
  width: 215px;
  text-align: center;
  font: 700 72px/70px "DejaVu Sans", sans-serif;
  -webkit-text-stroke: 2px #c9c9c9;
  opacity: .85;
  white-space: nowrap;
}
.wm-dots { position: absolute; left: 15px; top: 74px; display: flex; }
.wm-dots i { width: 14px; height: 14px; border-radius: 50%; background: #c9c9c9; display: block; }
.wm-en { position: absolute; left: 6px; top: 80px; font: 400 36px/40px "Lato", sans-serif; letter-spacing: 1px; -webkit-text-stroke: .5px #c9c9c9; white-space: nowrap; }
```
